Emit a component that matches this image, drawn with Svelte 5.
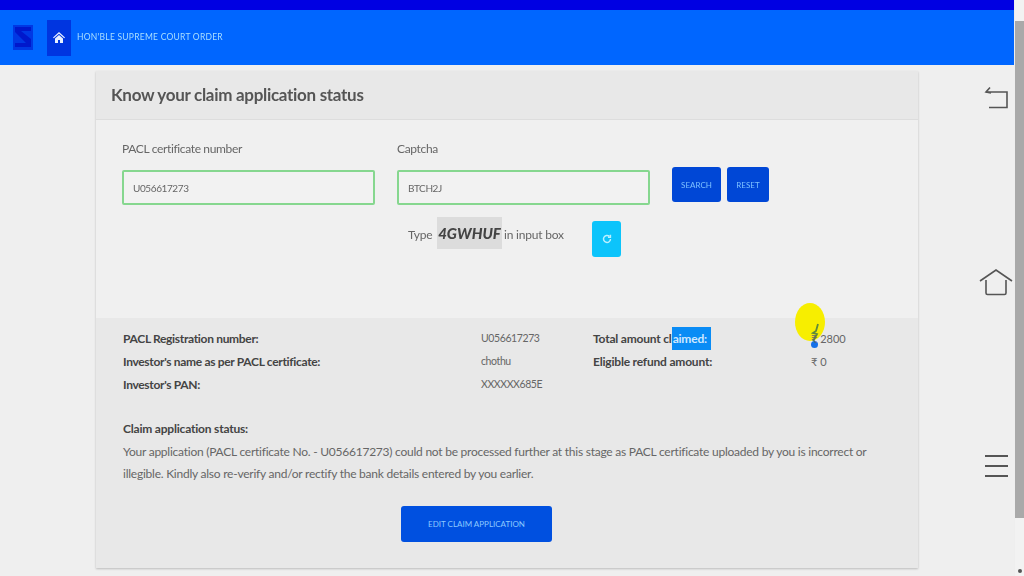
<script>
  const rows = [
    ['PACL Registration number:', 'U056617273'],
    ["Investor's name as per PACL certificate:", 'chothu'],
    ["Investor's PAN:", 'XXXXXX685E']
  ];
</script>

<div class="screen">
  <div class="page">
    <div class="topbar"></div>
    <nav class="nav">
      <svg class="logo" width="20" height="25" viewBox="0 0 20 25"><rect width="20" height="25" fill="#0038e4"/><path d="M2 2h16v4H8l10 8v8H2v-4h11L2 7z" fill="#0018cc"/></svg>
      <div class="homebtn">
        <svg width="12" height="11" viewBox="0 0 12 11"><path d="M6 0 0 5.500l.8.8L6 1.800l5.200 4.500.8-.8zM2 6.500V11h3V8h2v3h3V6.500L6 3z" fill="#e8f0ff"/></svg>
      </div>
      <span class="navlink">HON'BLE SUPREME COURT ORDER</span>
    </nav>
    <div class="body">
      <section class="card">
        <header class="cardhead"><h1>Know your claim application status</h1></header>
        <div class="form">
          <div class="fields">
            <div class="field">
              <span class="label">PACL certificate number</span>
              <div class="input">U056617273</div>
            </div>
            <div class="field">
              <span class="label">Captcha</span>
              <div class="input">BTCH2J</div>
            </div>
            <div class="actions">
              <button class="btn">SEARCH</button>
              <button class="btn reset">RESET</button>
            </div>
          </div>
          <div class="captcha">
            <span class="type">Type</span>
            <b class="code">4GWHUF</b>
            <span class="hint">in input box</span>
            <button class="refresh" aria-label="Refresh">
              <svg width="10" height="10" viewBox="0 0 10 10" fill="none" stroke="#bdf0ff" stroke-width="1.500"><path d="M8.500 5A3.500 3.500 0 1 1 7.400 2.400"/><path d="M8.400 .8v2.400H6"/></svg>
            </button>
          </div>
        </div>
        <div class="result">
          <div class="grid">
            <div class="col-a">
              {#each rows as r}<div class="b">{r[0]}</div>{/each}
            </div>
            <div class="col-b">
              {#each rows as r}<div>{r[1]}</div>{/each}
            </div>
            <div class="col-c">
              <div class="b">Total amount cl<span class="sel">aimed:</span></div>
              <div class="b">Eligible refund amount:</div>
            </div>
            <div class="col-d">
              <div class="amount">
                <span class="cursor"></span>
                <span class="dot"></span>
                <svg class="pointer" width="10" height="20" viewBox="0 0 10 20" fill="none" stroke="#5f8a3a" stroke-width="1.800"><path d="M7 1 5 8 2 10l4 1-4 7"/></svg>
                <span class="val">₹ 2800</span>
              </div>
              <div>₹ 0</div>
            </div>
          </div>
          <div class="status">
            <div class="b">Claim application status:</div>
            <p>Your application (PACL certificate No. - U056617273) could not be processed further at this stage as PACL certificate uploaded by you is incorrect or illegible. Kindly also re-verify and/or rectify the bank details entered by you earlier.</p>
          </div>
          <button class="edit">EDIT CLAIM APPLICATION</button>
        </div>
      </section>
      <aside class="softkeys">
        <svg width="26" height="24" viewBox="0 0 26 24" fill="none" stroke="#555" stroke-width="1.600"><path d="M3 6h21v15.500H6"/><path d="M7 1.500 3 6l5 1"/></svg>
        <svg width="34" height="28" viewBox="0 0 34 28" fill="none" stroke="#555" stroke-width="1.600"><path d="M1 13 17 2l16 11"/><path d="M7 12v13q0 1.500 1.500 1.500h17q1.500 0 1.500-1.500V12"/></svg>
        <svg width="24" height="24" viewBox="0 0 24 24" fill="none" stroke="#555" stroke-width="1.800"><path d="M1 2h23M1 12h23M1 22h23"/></svg>
      </aside>
    </div>
  </div>
  <div class="scroll">
    <div class="thumb"></div>
    <div class="arrow"></div>
  </div>
</div>

<style>
  :global(body) { margin: 0; background: #efefef; overflow: hidden; }
  .screen {
    display: flex; width: 1024px; height: 576px; overflow: hidden;
    font: 12px/1.2 Lato, sans-serif; color: #555; filter: blur(.5px);
  }
  .page { width: 1014px; display: flex; flex-direction: column; }
  .scroll { flex: 1; background: #f2f2f2; padding-top: 21px; border-left: 1px solid #eee; }
  .thumb { height: 497px; background: #a9a9a9; }
  .arrow { width: 4px; height: 4px; border-radius: 50%; background: #555; margin: 51px 0 0 3px; }
  .topbar { height: 10px; background: #0000e2; }
  .nav {
    height: 55px; background: #0066ff; display: flex; align-items: center;
    padding-left: 13px; box-sizing: border-box;
  }
  .logo { margin-right: 14px; }
  .homebtn {
    width: 24px; height: 36px; background: #0035e0; display: flex;
    align-items: center; justify-content: center; margin-right: 6px;
  }
  .navlink { font-size: 8.500px; color: #a8deff; letter-spacing: .25px; }
  .body { flex: 1; display: flex; padding: 6px 0 0 96px; min-height: 0; }
  .card { width: 822px; height: 497px; display: flex; flex-direction: column; box-shadow: 0 1px 2px #bbb; flex: none; }
  .cardhead {
    height: 49px; background: #e8e8e8; border-bottom: 1px solid #ddd; display: flex;
    align-items: center; padding-left: 15px; box-sizing: border-box;
  }
  h1 { margin: 0; font-size: 17px; font-weight: 700; color: #555; letter-spacing: -.3px; }
  .form { height: 198px; background: #f0f0f0; padding: 22px 26px 0; box-sizing: border-box; }
  .fields { display: flex; gap: 22px; }
  .field { display: flex; flex-direction: column; width: 253px; gap: 13px; font-size: 12px; }
  .label { color: #666; height: 15px; letter-spacing: -.35px; }
  .input {
    height: 35px; border: 2px solid #86d78f; border-radius: 2px; box-sizing: border-box;
    background: #f2f2f2; padding-left: 9px; display: flex; align-items: center;
    font-size: 10px; color: #666; letter-spacing: -.4px;
  }
  .actions { display: flex; gap: 6px; padding-top: 25px; }
  .btn {
    width: 49px; height: 35px; border: 0; border-radius: 3px; background: #0047d6;
    color: #7cc0ff; font: 8px Lato, sans-serif; padding: 0;
  }
  .reset { width: 42px; }
  .captcha { display: flex; align-items: flex-start; margin: 12px 0 0 286px; font-size: 12px; color: #666; letter-spacing: -.2px; }
  .type { width: 29px; padding-top: 11px; }
  .code {
    background: #dcdcdc; height: 32px; width: 65px; display: flex; align-items: center;
    justify-content: center; font-size: 15px; font-style: italic;
    color: #444; font-weight: 900; letter-spacing: 0;
  }
  .hint { width: 90px; padding: 11px 0 0 2px; box-sizing: border-box; }
  .refresh {
    width: 29px; height: 36px; margin-top: 4px; border: 0; border-radius: 3px; background: #0cc4fb;
    display: flex; align-items: center; justify-content: center; padding: 0;
  }
  .result { flex: 1; background: #e8e8e8; padding: 9px 27px 0; box-sizing: border-box; }
  .grid { display: flex; font-size: 12px; line-height: 23px; color: #666; }
  .col-a { width: 358px; }
  .col-a .b { letter-spacing: -.32px; }
  .col-b { width: 112px; font-size: 10.500px; letter-spacing: -.4px; }
  .col-c { width: 218px; }
  .col-d { font-size: 11px; }
  .b { font-weight: 700; color: #444; letter-spacing: -.2px; }
  .sel { background: #0a8cf5; color: #cfe8ff; padding: 4px 4px 4px 1px; }
  .amount { position: relative; }
  .cursor {
    position: absolute; left: -16px; top: -24px; width: 30px; height: 38px; border-radius: 50%;
    background: #f7ee00;
  }
  .dot { position: absolute; left: 0; top: 14px; width: 7px; height: 7px; border-radius: 50%; background: #1570e8; }
  .pointer { position: absolute; left: 0; top: -4px; }
  .val { position: relative; }
  .status { margin-top: 22px; font-size: 12px; line-height: 22.500px; }
  .status p { margin: 0; color: #666; width: 760px; letter-spacing: -.24px; }
  .edit {
    display: block; width: 151px; height: 36px; margin: 20px 0 0 278px; border: 0; border-radius: 3px;
    background: #0050e0; color: #8cc8ff; font: 8px Lato, sans-serif; padding: 0;
  }
  .softkeys {
    flex: 1; display: flex; flex-direction: column; align-items: center;
    gap: 158px; padding: 15px 0 0 60px;
  }
</style>
